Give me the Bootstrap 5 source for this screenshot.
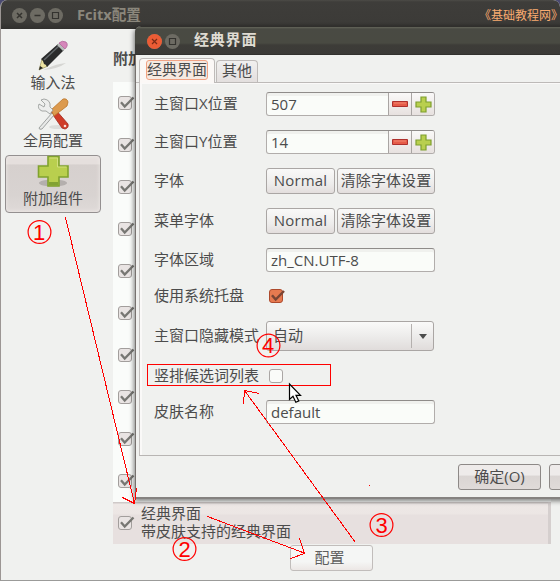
<!DOCTYPE html>
<html lang="zh-CN">
<head>
<meta charset="utf-8">
<meta name="viewport" content="width=device-width, initial-scale=1">
<title>Fcitx配置</title>
<link href="https://cdn.jsdelivr.net/npm/bootstrap@5.3.0/dist/css/bootstrap.min.css" rel="stylesheet">
<style>
body{width:560px;height:581px;overflow:hidden;background:#4a4a70;color:#4c4c4c;font:15px/18px "Open Sans","Noto Sans CJK SC",sans-serif}
.desk{width:560px;height:581px}
.main-win{width:560px;height:581px;background:#f0f1ef;border-radius:7px 7px 0 0;border-left:1px solid #9c9694;border-bottom:1px solid #9b9b99}
.main-bar{height:29px;margin-left:-1px;background:linear-gradient(#4c4b47,#3e3d3a 2px,#3c3b38 22px,#31302e);color:#8b877c;font-weight:700;padding:1px 0 0 12px}
.orb{width:15px;height:15px;border-radius:50%;background:#6d6b63;margin-right:3px;flex:none}
.main-bar .caption{margin:-3px 0 0 11px;font-size:14.6px}
.site{font-size:12px;color:#f9ab70;font-weight:400;white-space:nowrap;font-family:"Noto Sans CJK SC",sans-serif;font-feature-settings:"halt";margin-right:3px}
.side{width:103px;padding:10px 0 0 4px;flex:none}
.tool{width:96px;height:58px;border:1px solid transparent;border-radius:4px;flex:none}
.tool svg{display:block;flex:none}
.tool span{margin-top:1px}
.tool.picked{border-color:#949090;background:linear-gradient(#e5dfdd 14%,#d6d0ce 16%,#d8d3d1 70%,#dfdad8);box-shadow:inset 0 0 4px #efeae8}
.tool.picked svg{margin-top:-1px}
.pane{padding:0 8px 0 9px}
.pane .head{height:53px;padding-top:20px;font-weight:700}
.addons{background:#fafcfa;height:462px;width:438px}
.addon{height:42px;padding:0 4px}
.addon.on{background:linear-gradient(#cfc9c8 1px,#eee8e6 2px,#ece6e4 12px,#e7e0df 13px);border-right:3px solid #d5cfce}
.addon .about{margin:-2px 0 0 6px}
.tick{width:18px;height:16px;display:block;flex:none}
.gbtn{border:1px solid #aaa6a4;border-radius:3px;background:linear-gradient(#f9f9f8,#eeedec 60%,#e3dedd);color:#4c4c4c;height:26px;padding:0 0 2px;line-height:1;font-size:15px;flex:none}
.conf{width:83px;background:linear-gradient(#f5f6f5 65%,#ece7e5);border-color:#c1bdbb;color:#5e5e5e;margin:1px 2px 0 0;padding-right:3px}
.font-pair{width:169px}
.pick-font{width:69px;letter-spacing:.15px}
.reset-font{width:98px;letter-spacing:.1px}
.dlg{left:135px;top:26px;width:440px;height:473px;background:#f0f1ef;border-radius:6px 0 0 0;border-left:1px solid #77726f;border-bottom:2px solid #858280;box-shadow:-1px 2px 5px rgba(0,0,0,.5)}
.dlg-bar{height:29px;background:linear-gradient(#302f2c 1px,#65665b 1px,#494a43 3px,#494a42 17px,#3d3c38 19px,#3b3a37 28px,#292826);border-radius:6px 0 0 0;color:#dfdbd2;font-weight:700;padding:1px 0 0 12px;margin-left:-1px}
.caption-dlg{margin:-5px 0 0 11px;letter-spacing:.8px}
.tabs{height:28px;padding:3px 0 0 3px;border-bottom:1px solid #bdbab8}
.tb{border:1px solid #bfbbb9;border-bottom:0;border-radius:4px 4px 0 0;color:#4c4c4c;padding:0}
.tb.front{width:76px;height:25px;background:#fbf8f6;margin-bottom:-1px;padding:1px 6px 3px}
.tb.front span{border:1px solid #f1a283;border-radius:3px;background:#f5e9e1;height:20px;padding-bottom:2px}
.tb.back{width:42px;height:22px;background:linear-gradient(#f1f0ef,#e3dfde);margin-left:1px;padding-bottom:3px}
.sheet{height:373px;margin-left:3px;border-left:1px solid #c4c0be;border-bottom:1px solid #b8b5b3;box-shadow:inset 2px 1px 0 #faf9f8;padding:2px 0 0 14px}
.grid9{display:grid;grid-template-columns:112px 170px;grid-template-rows:38px 38px 40px 40px 38px 34px 46px 33px 40px;align-items:center}
.grid9>span{white-space:nowrap;margin-top:-2px}
.grid9>.tick{margin-left:1px}
.entry{height:24px;border:1px solid #b1adab;border-top:1px solid #8f8c8a;border-radius:3px;background:#fafcf9;box-shadow:inset 0 3px 0 #f0f1ee;padding:0 4px 1px;width:169px;overflow:hidden}
.spin{padding:0 0 0 4px}
.spin i{width:23px;height:22px;border-left:1px solid #a9a5a3;background:linear-gradient(#faf9f8,#e7e1df)}
.combo{width:168px;height:30px;border:1px solid #aaa6a4;border-radius:3px;background:linear-gradient(#fafaf9,#edeceb 50%,#e0dcdb);padding-left:6px}
.combo span{margin-top:-2px}
.combo i{width:22px;height:24px;border-left:1px solid #b4b0ae}
.foot{padding:8px 0 0 322px}
.foot .gbtn{width:83px;margin-right:8px;background:linear-gradient(#eeebea 42%,#dad5d3 46%,#e0dbd9);border-color:#8d8987}
.marks{left:0;top:0;pointer-events:none}
.nums{font:22px "Liberation Sans",sans-serif}
</style>
<script src="https://cdn.jsdelivr.net/npm/bootstrap@5.3.0/dist/js/bootstrap.bundle.min.js"></script>
</head>
<body>
<svg width="0" height="0" class="position-absolute">
<defs>
<symbol id="tick" viewBox="0 0 18 16"><rect x="1.500" y="1.500" width="13" height="13" rx="2.500" fill="#e9e4e3" stroke="#a29e9c"/><path d="M4 7.200l3.700 4.300L16.500 2.500" fill="none" stroke="#777773" stroke-width="2.300"/></symbol>
<symbol id="plus" viewBox="0 0 32 32"><path d="M11 1.500h11v9.500h9v11h-9v9h-11v-9h-9.500v-11h9.500z" fill="#b9cf4e" stroke="#80a22f" stroke-width="1.600"/><path d="M12.500 3h8v9h9" fill="none" stroke="#d2df7f" stroke-width="1"/><path d="M12 27h9v3.500h-9z" fill="#82a233"/></symbol>
<symbol id="plus-s" viewBox="0 0 17 17"><path d="M6 1h5v5h5v5h-5v5h-5v-5h-5v-5h5z" fill="#b9cf4e" stroke="#7e9f2e" stroke-width="1.200"/></symbol>
<symbol id="minus-s" viewBox="0 0 16 6"><path d="M.5.5h15v5h-15z" fill="#e65b48" stroke="#ae302d"/><path d="M2 2h12" stroke="#f18a73"/></symbol>
</defs>
</svg>
<div class="desk position-relative overflow-hidden">
 <div class="main-win overflow-hidden">
  <header class="main-bar d-flex align-items-center">
   <svg class="orb" viewBox="0 0 15 15"><path d="M5 5l5 5M10 5l-5 5" stroke="#34332f" stroke-width="1.500"/></svg>
   <svg class="orb" viewBox="0 0 15 15"><path d="M4.500 7.500h6" stroke="#34332f" stroke-width="1.500"/></svg>
   <svg class="orb" viewBox="0 0 15 15"><path d="M4.500 4.500h6v6h-6z" fill="none" stroke="#34332f" stroke-width="1.200"/></svg>
   <span class="caption">Fcitx配置</span>
   <span class="site ms-auto">《基础教程网》</span>
  </header>
  <div class="d-flex">
   <nav class="side">
    <div class="tool d-flex flex-column align-items-center">
     <svg width="32" height="32" viewBox="0 0 32 32"><path d="M6 30q15-1 23-7-10 1-18 5z" fill="#d6d6d3"/><path d="M2 30l3-11 6 7z" fill="#ece2a0" stroke="#8a8449" stroke-width=".6"/><path d="M2 30l1-4 3 2z" fill="#222"/><path d="M4 19L21 4l6 6-17 17q-1-3-3-3 0-3-3-5z" fill="#2a2b2b"/><path d="M7 20L23 5" stroke="#62676a" stroke-width="1.500"/><path d="M20 5l2-2 6 6-2 2z" fill="#b8bcba"/><path d="M22 3q3-3 7-1 3 3-1 7z" fill="#d687bb" stroke="#aa5f92" stroke-width=".7"/></svg>
     <span>输入法</span>
    </div>
    <div class="tool d-flex flex-column align-items-center">
     <svg width="32" height="32" viewBox="0 0 32 32"><ellipse cx="21" cy="29" rx="9" ry="2" fill="#dcdddb"/><path d="M14 14l4-3 13 15q1 4-3 5l-3-1z" fill="#cf3c28" stroke="#a12b20" stroke-width=".8"/><circle cx="28" cy="28" r="1.300" fill="#f7dfd8"/><path d="M2 30l13-15 2 2L5 31q-3 1-3-1z" fill="#e8e9e8" stroke="#8c8f8e" stroke-width=".8"/><path d="M14 12L26 1q4-1 5 3l-1 4-13 10z" fill="#dc9a4e" stroke="#ba752a" stroke-width=".8"/><path d="M4 2l4 4-1 3-5-3q-2 5 3 7l4 0 4 3 3-4-3-3q1-7-6-8z" fill="#edeeed" stroke="#929593" stroke-width=".8"/></svg>
     <span>全局配置</span>
    </div>
    <div class="tool picked d-flex flex-column align-items-center">
     <svg width="32" height="33" viewBox="0 0 32 33"><ellipse cx="16" cy="28" rx="14" ry="3.500" fill="#b4afad"/><use href="#plus" width="32" height="32"/></svg>
     <span>附加组件</span>
    </div>
   </nav>
   <section class="pane">
    <div class="head">附加组件</div>
    <div class="addons">
     <div class="addon d-flex align-items-center"><svg class="tick"><use href="#tick"/></svg></div>
     <div class="addon d-flex align-items-center"><svg class="tick"><use href="#tick"/></svg></div>
     <div class="addon d-flex align-items-center"><svg class="tick"><use href="#tick"/></svg></div>
     <div class="addon d-flex align-items-center"><svg class="tick"><use href="#tick"/></svg></div>
     <div class="addon d-flex align-items-center"><svg class="tick"><use href="#tick"/></svg></div>
     <div class="addon d-flex align-items-center"><svg class="tick"><use href="#tick"/></svg></div>
     <div class="addon d-flex align-items-center"><svg class="tick"><use href="#tick"/></svg></div>
     <div class="addon d-flex align-items-center"><svg class="tick"><use href="#tick"/></svg></div>
     <div class="addon d-flex align-items-center"><svg class="tick"><use href="#tick"/></svg></div>
     <div class="addon d-flex align-items-center"><svg class="tick"><use href="#tick"/></svg></div>
     <div class="addon on d-flex align-items-center"><svg class="tick"><use href="#tick"/></svg><div class="about">经典界面<br>带皮肤支持的经典界面</div></div>
    </div>
    <div class="d-flex justify-content-center"><button class="btn gbtn conf">配置</button></div>
   </section>
  </div>
 </div>

 <div class="dlg position-absolute">
  <header class="dlg-bar d-flex align-items-center">
   <svg class="orb" viewBox="0 0 15 15"><circle cx="7.500" cy="7.500" r="8" fill="#eb5c35"/><path d="M5 5l5 5M10 5l-5 5" stroke="#7b2b16" stroke-width="1.200"/></svg>
   <svg class="orb" viewBox="0 0 15 15"><path d="M4.500 4.500h6v6h-6z" fill="none" stroke="#34332f" stroke-width="1.200"/></svg>
   <span class="caption-dlg">经典界面</span>
  </header>
  <div class="tabs d-flex align-items-end">
   <div class="tb front"><span class="d-flex align-items-center justify-content-center text-nowrap">经典界面</span></div>
   <div class="tb back d-flex align-items-center justify-content-center">其他</div>
  </div>
  <div class="sheet">
   <div class="grid9">
    <span>主窗口X位置</span>
    <div class="entry spin d-flex align-items-center"><span class="me-auto">507</span><i class="d-flex align-items-center justify-content-center"><svg width="16" height="6"><use href="#minus-s"/></svg></i><i class="d-flex align-items-center justify-content-center"><svg width="17" height="17"><use href="#plus-s"/></svg></i></div>
    <span>主窗口Y位置</span>
    <div class="entry spin d-flex align-items-center"><span class="me-auto">14</span><i class="d-flex align-items-center justify-content-center"><svg width="16" height="6"><use href="#minus-s"/></svg></i><i class="d-flex align-items-center justify-content-center"><svg width="17" height="17"><use href="#plus-s"/></svg></i></div>
    <span>字体</span>
    <div class="d-flex font-pair"><button class="btn gbtn pick-font">Normal</button><button class="btn gbtn reset-font ms-auto">清除字体设置</button></div>
    <span>菜单字体</span>
    <div class="d-flex font-pair"><button class="btn gbtn pick-font">Normal</button><button class="btn gbtn reset-font ms-auto">清除字体设置</button></div>
    <span>字体区域</span>
    <div class="entry d-flex align-items-center">zh_CN.UTF-8</div>
    <span>使用系统托盘</span>
    <svg class="tick" viewBox="-1 0 18 16"><rect x="1.500" y="1.500" width="13" height="13" rx="2.500" fill="#e77a50" stroke="#ad4a2c"/><path d="M4 7.200l3.700 4.300L16 3" fill="none" stroke="#7a4534" stroke-width="2.500"/></svg>
    <span>主窗口隐藏模式</span>
    <div class="combo d-flex align-items-center"><span class="me-auto">自动</span><i class="d-flex align-items-center justify-content-center"><svg width="8" height="5"><path d="M0 0h8l-4 5z" fill="#4c4c4c"/></svg></i></div>
    <span>竖排候选词列表</span>
    <svg class="tick" viewBox="-1 0 18 16"><rect x="1.500" y="1.500" width="13" height="13" rx="2.500" fill="#fafbf9" stroke="#aaa6a4"/></svg>
    <span>皮肤名称</span>
    <div class="entry d-flex align-items-center">default</div>
   </div>
  </div>
  <div class="foot d-flex"><button class="btn gbtn">确定(O)</button><button class="btn gbtn" aria-label="取消"></button></div>
 </div>

 <svg class="marks position-absolute" width="560" height="581" viewBox="0 0 560 581">
  <g fill="none" stroke="#f00" stroke-width="1" shape-rendering="crispEdges">
   <rect x="147.500" y="364.500" width="183" height="21"/>
   <path d="M65.500 217.500L134.500 503.500M122.500 497.500l12 6 2-15"/>
   <path d="M207.500 516.500L305.500 553.500M299.500 538.500l5 15-14 5"/>
   <path d="M355.500 542.500L244.500 390.500M243.500 404.500l1-14 15 3"/>
   <path d="M369 485.500h1"/>
  </g>
  <g fill="none" stroke="#f00" stroke-width="1.200">
   <circle cx="39.500" cy="232" r="11.400"/><circle cx="184.500" cy="549" r="11.400"/><circle cx="381.500" cy="525" r="11.400"/><circle cx="268.500" cy="345.500" r="11.400"/>
  </g>
  <g class="nums" fill="#f00" text-anchor="middle">
   <text x="39" y="239.500">1</text><text x="184.500" y="556.500">2</text><text x="381.500" y="532.500">3</text><text x="268" y="353">4</text>
  </g>
  <path d="M289.500 384v15.500l3.500-3.200 2.800 6 3-1.400-2.800-5.600h4.500z" fill="#fff" stroke="#000" stroke-width="1.200"/>
 </svg>
</div>
</body>
</html>
